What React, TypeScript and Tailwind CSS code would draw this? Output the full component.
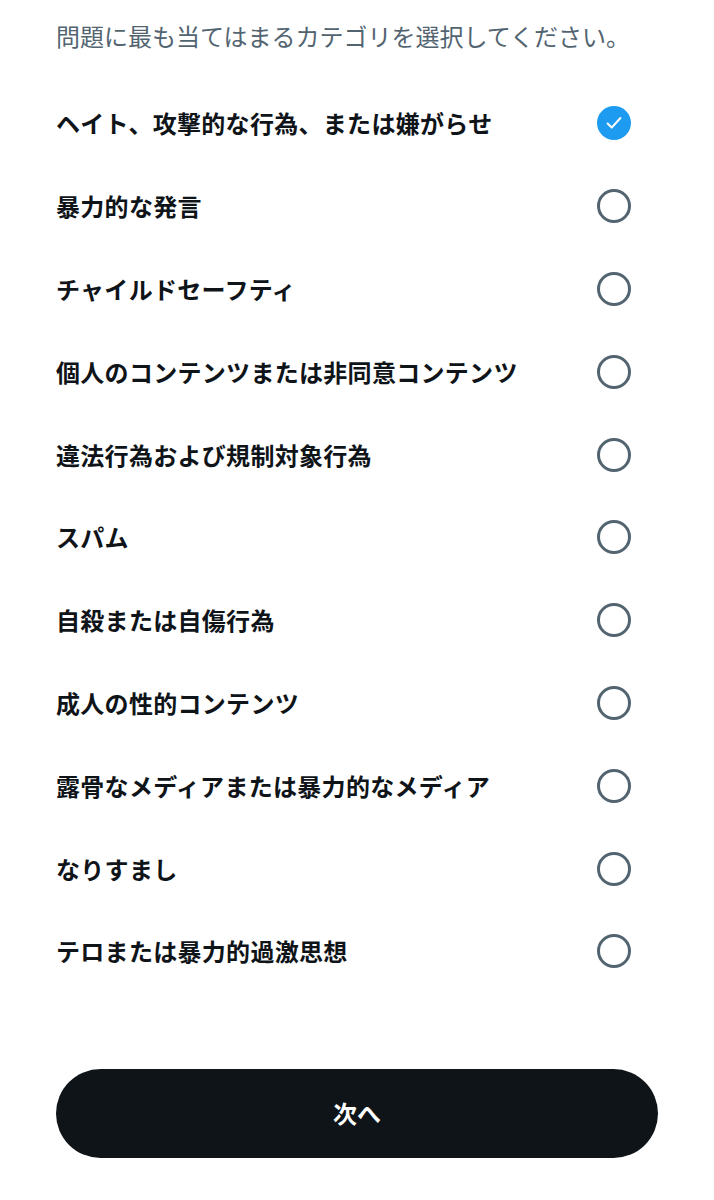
const categories = [
  "ヘイト、攻撃的な行為、または嫌がらせ",
  "暴力的な発言",
  "チャイルドセーフティ",
  "個人のコンテンツまたは非同意コンテンツ",
  "違法行為および規制対象行為",
  "スパム",
  "自殺または自傷行為",
  "成人の性的コンテンツ",
  "露骨なメディアまたは暴力的なメディア",
  "なりすまし",
  "テロまたは暴力的過激思想",
];

function Radio({ checked }: { checked: boolean }) {
  if (checked) {
    return (
      <div className="flex h-[34px] w-[34px] items-center justify-center rounded-full bg-[#1d9bf0]">
        <svg width="22" height="22" viewBox="0 0 24 24" fill="none">
          <path
            d="M5 12.5l4.5 4.5L19 6.5"
            stroke="white"
            strokeWidth="2.2"
            strokeLinecap="round"
            strokeLinejoin="round"
          />
        </svg>
      </div>
    );
  }
  return <div className="h-[34px] w-[34px] rounded-full border-[3px] border-[#536471]" />;
}

export default function App() {
  return (
    <div
      className="min-h-[1200px] bg-white px-[56px]"
      style={{ fontFamily: '"Noto Sans CJK JP", "Noto Sans", sans-serif' }}
    >
      <p className="pt-[20px] text-[24px] leading-[32px] text-[#536471]">
        問題に最も当てはまるカテゴリを選択してください。
      </p>

      <div className="mt-[30px] flex flex-col">
        {categories.map((c, i) => (
          <div key={c} className="flex h-[82.8px] items-center justify-between">
            <span className="text-[24px] font-semibold tracking-[0.3px] text-[#0f1419]">{c}</span>
            <div className="mr-[27px]">
              <Radio checked={i === 0} />
            </div>
          </div>
        ))}
      </div>

      <button className="mt-[76px] flex h-[89px] w-full items-center justify-center rounded-full bg-[#0f1419] text-[24px] font-semibold text-white">
        次へ
      </button>
    </div>
  );
}
